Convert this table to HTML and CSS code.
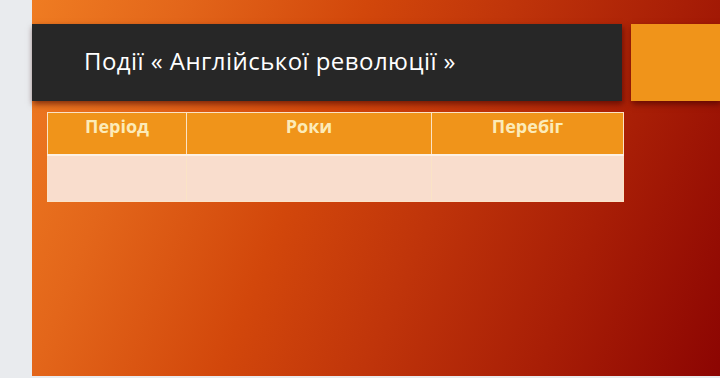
FILE: index.html
```html
<!DOCTYPE html>
<html lang="uk">
<head>
<meta charset="utf-8">
<title>Події « Англійської революції »</title>
<link rel="stylesheet" href="styles.css">
</head>
<body>
<div class="workspace">
  <section class="slide">
    <header class="title-row">
      <div class="title-bar">
        <h1 class="title">Події « Англійської революції »</h1>
      </div>
      <div class="accent-block"></div>
    </header>
    <table class="events">
      <thead>
        <tr>
          <th class="col-period">Період</th>
          <th class="col-years">Роки</th>
          <th class="col-course">Перебіг</th>
        </tr>
      </thead>
      <tbody>
        <tr>
          <td></td>
          <td></td>
          <td></td>
        </tr>
      </tbody>
    </table>
  </section>
</div>
</body>
</html>
```
FILE: styles.css
```css
html, body {
  margin: 0;
  padding: 0;
}

body {
  width: 720px;
  height: 378px;
  overflow: hidden;
  background: #e9ebee;
  font-family: "Open Sans", "DejaVu Sans", sans-serif;
}

.workspace {
  display: flex;
  padding-left: 32px;
  height: 378px;
  box-sizing: border-box;
}

.slide {
  width: 688px;
  height: 376px;
  display: flex;
  flex-direction: column;
  background: linear-gradient(112deg, #ef7c22 0%, #e3661a 18%, #d2470b 40%, #bf340a 58%, #a81e06 78%, #8c0502 100%);
}

.title-row {
  display: flex;
  gap: 9px;
  margin-top: 24px;
  height: 77px;
}

.title-bar {
  width: 590px;
  background: #272727;
  display: flex;
  align-items: center;
  padding-left: 52px;
  box-sizing: border-box;
  box-shadow: 1px 3px 6px rgba(60, 0, 0, 0.6);
}

.title {
  margin: 0 0 4px;
  font-size: 24px;
  font-weight: 400;
  color: #ffffff;
  letter-spacing: 0.45px;
}

.accent-block {
  flex: 1;
  background: #f0941a;
  box-shadow: 1px 3px 6px rgba(60, 0, 0, 0.6);
}

.events {
  margin: 11px 0 0 15px;
  width: 576px;
  border-collapse: collapse;
  table-layout: fixed;
}

.events th,
.events td {
  border: 1px solid #fbe3c6;
  padding: 0;
}

.events th {
  height: 42px;
  background: #f0941a;
  color: #fcebb8;
  font-size: 18px;
  font-weight: 700;
  text-align: center;
  vertical-align: top;
  padding-top: 1px;
  box-sizing: border-box;
}

.events td {
  height: 45px;
  background: #f9ddcd;
  border-top: 2px solid #fdf1e6;
}

.col-period { width: 139px; }
.col-years { width: 245px; }
.col-course { width: 192px; }
```
